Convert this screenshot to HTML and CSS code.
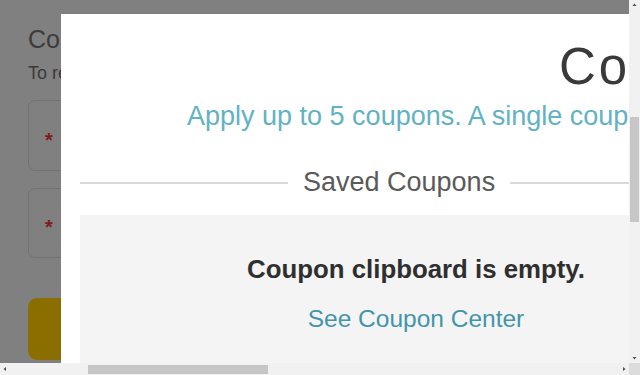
FILE: index.html
```html
<!DOCTYPE html>
<html lang="en">
<head>
<meta charset="utf-8">
<title>Coupons</title>
<link rel="stylesheet" href="styles.css">
</head>
<body>
<div class="screen">
  <div class="viewport">
    <div class="page">
      <h1 class="page-title">Coupons</h1>
      <p class="page-sub">To redeem a coupon, enter the code below.</p>
      <div class="field"><span class="req">*</span></div>
      <div class="field field-2"><span class="req">*</span></div>
      <div class="page-btn"></div>
    </div>
    <div class="modal" role="dialog">
      <h2 class="modal-title">Coupons</h2>
      <p class="modal-sub">Apply up to 5 coupons. A single coupon applies to a single product.</p>
      <div class="divider"><span class="rule rule-left"></span><span class="divider-text">Saved Coupons</span><span class="rule"></span></div>
      <div class="empty">
        <p class="empty-title">Coupon clipboard is empty.</p>
        <a class="empty-link" href="#">See Coupon Center</a>
      </div>
    </div>
  </div>
  <div class="vscroll">
    <svg class="arrow" width="11" height="10" viewBox="0 0 11 10"><polygon points="3.5,6 7.5,6 5.5,3.5" fill="#505050"/></svg>
    <div class="vthumb"></div>
    <div class="vfill"></div>
    <svg class="arrow" width="11" height="10" viewBox="0 0 11 10"><polygon points="3.5,4 7.5,4 5.5,6.5" fill="#505050"/></svg>
  </div>
  <div class="hscroll">
    <svg class="arrow" width="10" height="12" viewBox="0 0 10 12"><polygon points="6,4 6,8 3.5,6" fill="#505050"/></svg>
    <div class="hthumb"></div>
    <div class="hfill"></div>
    <svg class="arrow" width="10" height="12" viewBox="0 0 10 12"><polygon points="4,4 4,8 6.5,6" fill="#505050"/></svg>
  </div>
  <div class="corner"></div>
</div>
</body>
</html>
```
FILE: styles.css
```css
* { box-sizing: border-box; }
html, body { margin: 0; padding: 0; }
body {
  width: 640px;
  height: 375px;
  overflow: hidden;
  font-family: "Liberation Sans", Arial, sans-serif;
  background: #ffffff;
}
.screen {
  display: grid;
  grid-template-columns: 629px 11px;
  grid-template-rows: 363px 12px;
  width: 640px;
  height: 375px;
}
.viewport {
  position: relative;
  overflow: hidden;
  background: #808080;
}
/* dimmed page behind the dialog */
.page {
  padding: 27px 0 0 28px;
  width: 360px;
}
.page-title {
  margin: 0;
  font-size: 25px;
  line-height: 25px;
  font-weight: 400;
  color: #3c3c3c;
  white-space: nowrap;
}
.page-sub {
  margin: 12px 0 0;
  font-size: 18px;
  line-height: 19px;
  color: #3a3a3a;
  white-space: nowrap;
}
.field {
  margin-top: 17px;
  height: 71px;
  border: 1px solid #727272;
  border-radius: 7px;
  display: flex;
  align-items: center;
  padding-left: 16px;
}
.field-2 { height: 70px; }
.req {
  color: #7e1c1c;
  font-size: 20px;
  font-weight: 700;
  line-height: 1;
  padding-top: 8px;
}
.page-btn {
  margin-top: 40px;
  height: 62px;
  border-radius: 9px;
  background: #8a6f00;
}
/* dialog */
.modal {
  position: absolute;
  left: 61px;
  top: 14px;
  width: 678px;
  height: 420px;
  background: #ffffff;
  padding: 0 19px;
}
.modal-title {
  margin: 27px 0 0;
  padding-left: 479px;
  font-size: 51px;
  line-height: 52px;
  font-weight: 400;
  letter-spacing: 3px;
  color: #3a3a3a;
  white-space: nowrap;
}
.modal-sub {
  margin: 10px 0 0;
  padding-left: 107px;
  font-size: 27px;
  line-height: 26px;
  color: #62b2c2;
  white-space: nowrap;
}
.divider {
  margin-top: 40px;
  display: flex;
  align-items: center;
  gap: 15px;
  height: 27px;
}
.rule {
  flex: 1;
  height: 2px;
  background: #dadada;
}
.rule-left { flex: 0 0 208px; }
.divider-text {
  font-size: 27px;
  line-height: 27px;
  color: #5a5a5a;
  white-space: nowrap;
}
.empty {
  margin-top: 19px;
  background: #f4f4f4;
  height: 300px;
  padding: 41px 0 0 32px;
  text-align: center;
}
.empty-title {
  margin: 0;
  font-size: 25.8px;
  line-height: 26px;
  font-weight: 700;
  color: #2f2f2f;
}
.empty-link {
  display: inline-block;
  margin-top: 25px;
  font-size: 24.5px;
  line-height: 24px;
  color: #4395ab;
  text-decoration: none;
}
/* scrollbars */
.vscroll {
  background: #f1f1f1;
  display: flex;
  flex-direction: column;
}
.vthumb {
  margin: 107px 1px 0;
  height: 105px;
  background: #c6c6c6;
}
.vfill { flex: 1; }
.hscroll {
  background: #f1f1f1;
  display: flex;
  align-items: center;
}
.hthumb {
  margin-left: 78px;
  width: 180px;
  height: 9px;
  background: #c6c6c6;
}
.hfill { flex: 1; }
.arrow { display: block; flex: none; }
.corner { background: #dcdcdc; }
```
